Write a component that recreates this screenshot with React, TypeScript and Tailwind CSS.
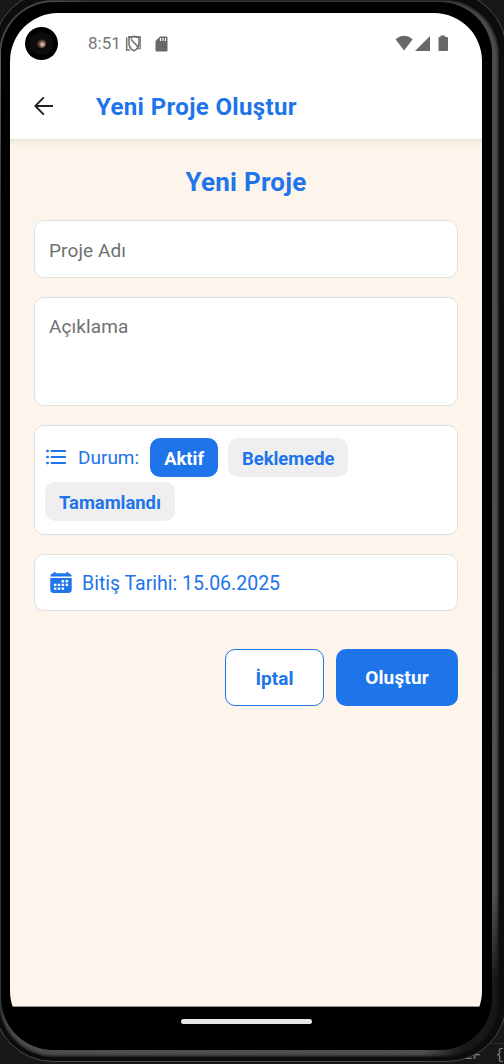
import React from "react";

function Chip({ label, active = false }: { label: string; active?: boolean }) {
  return (
    <span
      className={
        "flex h-[39px] items-center rounded-[10px] px-[14px] pt-[2px] text-[18.4px] font-bold " +
        (active ? "bg-[#1e74e9] text-white" : "bg-[#efeff0] text-[#1e74e9]")
      }
    >
      {label}
    </span>
  );
}

function StatusBar() {
  return (
    <div className="flex h-[61px] shrink-0 items-center bg-white pl-[15px]">
      <div className="flex size-[33px] items-center justify-center rounded-full bg-black">
        <div className="flex size-[23px] items-center justify-center rounded-full bg-[#0d0c0c]">
          <div className="size-[9px] rounded-full bg-[radial-gradient(circle_at_60%_60%,#d5b3a0_0_15%,#6c5046_40%,#1c1413_75%)]" />
        </div>
      </div>
      <span className="ml-[30px] w-[32px] whitespace-nowrap text-[17px] leading-none text-[#767676]">8:51</span>
      <svg className="ml-[5px]" width="17" height="17" viewBox="0 0 17 17" fill="none">
        <path d="M3 1.8H15.3V13.5H12" stroke="#8c8c8c" strokeWidth="1.4" />
        <path d="M1.7 2.5V15H5" stroke="#707070" strokeWidth="1.5" />
        <path d="M9 1.2L14 2.8V8C14 12 12 14.5 9 15.8C6 14.5 4 12 4 8V2.8Z" stroke="#6a6a6a" strokeWidth="1.5" />
        <path d="M6.3 3.5C6.3 8 12 7.5 12.5 12.5" stroke="#707070" strokeWidth="1.5" />
      </svg>
      <svg className="ml-[13px]" width="13" height="16" viewBox="0 0 13 16">
        <path d="M5 0.5H11.5Q12.5 0.5 12.5 1.5V14.5Q12.5 15.5 11.5 15.5H1.5Q0.5 15.5 0.5 14.5V5Z" fill="#686868" />
        <path d="M5.5 2V5M8 2V5M10.5 2V5" stroke="#fff" strokeWidth="1.2" />
      </svg>
      <svg className="ml-[227px]" width="54" height="17" viewBox="0 0 54 17" fill="#686868">
        <path d="M0.5 4.2Q9 -2.6 17.7 4.2L9.1 15.5Z" />
        <path d="M20 16H35V1Z" />
        <path d="M45.5 0.5H50V2H52Q53 2 53 3V15Q53 16 52 16H44.5Q43.5 16 43.5 15V3Q43.5 2 44.5 2H45.5Z" />
      </svg>
    </div>
  );
}

function ListIcon() {
  return (
    <svg className="mb-[2px] ml-[1px]" width="21" height="16" viewBox="0 0 21 16" fill="none" stroke="#1e74e9" strokeWidth="2.1" strokeLinecap="round">
      <path d="M5.6 2H19.1M5.6 8H19.1M5.6 14H19.1" />
      <path d="M1.4 2H1.7M1.4 8H1.7M1.4 14H1.7" strokeWidth="2.6" />
    </svg>
  );
}

function CalendarIcon() {
  return (
    <svg width="22" height="22" viewBox="0 0 22 22" fill="#1e74e9">
      <path d="M3.7 0H5.5V1.2H16.5V0H18.3V1.2Q21.7 1.5 21.7 4.6H0.3Q0.3 1.5 3.7 1.2Z" />
      <path d="M0.3 6H21.7V17.5Q21.7 21 18.2 21H3.8Q0.3 21 0.3 17.5Z" />
      <g fill="#fff">
        <path d="M11.6 8.1h2.5v2.3h-2.5zM15.6 8.1h2.5v2.3h-2.5zM3.9 11.8h2.5v2.3h-2.5zM7.7 11.8h2.5v2.3h-2.5zM11.6 11.8h2.5v2.3h-2.5zM15.6 11.8h2.5v2.3h-2.5zM3.9 15.5h2.5v2.3h-2.5zM7.7 15.5h2.5v2.3h-2.5zM11.6 15.5h2.5v2.3h-2.5z" />
      </g>
    </svg>
  );
}

const box = "rounded-[10px] border border-[#dedfe1] bg-white";

export default function App() {
  return (
    <div className="h-[1064px] w-[504px] overflow-hidden bg-[#171717] font-['Roboto',sans-serif]">
      <div className="relative">
        <div className="absolute left-[464px] top-[1043px] flex w-[40px] justify-between border-t border-[#2a2a2a] font-['Liberation_Mono',monospace] text-[14px] leading-[22px] text-[#858585]">
          <span>EF</span>
          <span>{"{"}</span>
        </div>
      </div>
      <div className="relative ml-[-7px] mt-[-9px] h-[1071px] w-[514px] rounded-[60px] border border-[#4a4a4a] bg-[#0c0c0c] pb-[4px] pl-[5px] pr-[7px] pt-[8px]">
        <div className="h-full rounded-[55px] bg-[linear-gradient(115deg,#8a8a8a_0,#808080_4%,#484848_10%,#505050_92%,#181818_96%)] pb-[7px] pl-[2px] pr-[7px] pt-[2px] shadow-[inset_0_0_3px_1px_#111]">
          <div className="h-full rounded-[52px] bg-black pl-[9px] pr-[10px] pt-[11px]">
            <div className="flex h-[1026px] w-[472px] flex-col overflow-hidden rounded-[48px]">
              <StatusBar />
              <header className="relative flex h-[65px] shrink-0 items-center bg-white pl-[24px]">
                <svg className="mb-[2px]" width="20" height="20" viewBox="0 0 20 20" fill="none" stroke="#202124" strokeWidth="1.9">
                  <path d="M19 10H1.5M9.8 1.3L1.3 10L9.8 18.7" />
                </svg>
                <h1 className="ml-[42px] text-[24px] font-bold tracking-[0.36px] text-[#1e74e9]">Yeni Proje Oluştur</h1>
              </header>
              <main className="flex flex-1 flex-col bg-[linear-gradient(#e7dfd7_0,#f3ece0_2px,#fbf4e8_7px,#fdf5eb_12px)] px-[24px]">
                <h2 className="mt-[24px] text-center text-[26px] font-bold leading-[39px] tracking-[0.25px] text-[#1e74e9]">Yeni Proje</h2>
                <div className={box + " mt-[18px] flex h-[58px] items-center px-[14px] pt-[4px] text-[19px] tracking-[0.1px] text-[#707070]"}>Proje Adı</div>
                <div className={box + " mt-[19px] h-[109px] px-[14px] pt-[15px] text-[19px] tracking-[0.1px] text-[#707070]"}>Açıklama</div>
                <div className={box + " mt-[19px] flex h-[110px] flex-wrap content-start items-center gap-y-[5px] px-[10px] pt-[12px]"}>
                  <ListIcon />
                  <span className="ml-[11px] mr-[11px] pt-[2px] text-[19px] text-[#1e74e9]">Durum:</span>
                  <Chip label="Aktif" active />
                  <span className="w-[10px]" />
                  <Chip label="Beklemede" />
                  <Chip label="Tamamlandı" />
                </div>
                <div className={box + " mt-[19px] flex h-[57px] items-center gap-[10px] px-[15px] text-[19.5px] text-[#1e74e9]"}>
                  <CalendarIcon />
                  <span className="pt-[2px]">Bitiş Tarihi: 15.06.2025</span>
                </div>
                <div className="mt-[38px] flex justify-end gap-[12px] text-[19px] font-bold">
                  <button className="h-[57px] w-[99px] rounded-[10px] border border-[#1e74e9] bg-white pt-[3px] text-[#1e74e9]">İptal</button>
                  <button className="h-[57px] w-[122px] rounded-[10px] bg-[#1e74e9] pt-[2px] tracking-[0.15px] text-white">Oluştur</button>
                </div>
              </main>
              <div className="flex h-[33px] shrink-0 justify-center border-t border-[#96928d] bg-black pt-[12px]">
                <div className="h-[5px] w-[131px] rounded-full bg-[#e6e6e6]" />
              </div>
            </div>
          </div>
        </div>
      </div>
    </div>
  );
}
